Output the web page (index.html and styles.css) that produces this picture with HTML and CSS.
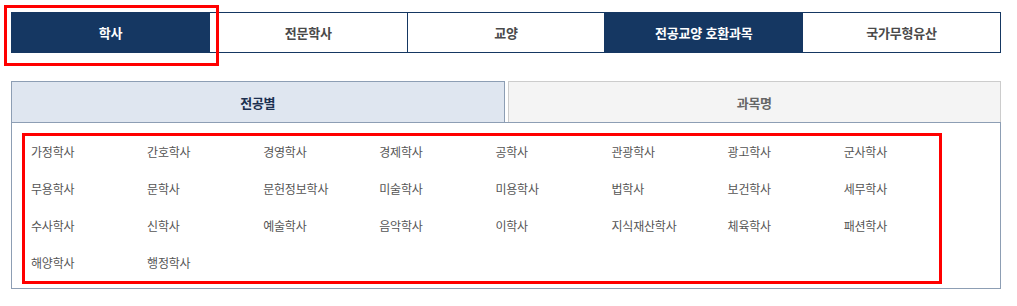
FILE: index.html
```html
<!DOCTYPE html>
<html lang="ko">
<head>
<meta charset="utf-8">
<title>학위 과목</title>
<link rel="stylesheet" href="styles.css">
</head>
<body>
<div class="page">
  <div class="deg-tabs-wrap">
    <ul class="deg-tabs">
      <li class="deg-tab is-active">학사</li>
      <li class="deg-tab">전문학사</li>
      <li class="deg-tab">교양</li>
      <li class="deg-tab is-active">전공교양 호환과목</li>
      <li class="deg-tab">국가무형유산</li>
    </ul>
    <div class="mark mark-tab"></div>
  </div>

  <div class="sub-tabs">
    <div class="sub-tab is-active">전공별</div>
    <div class="sub-tab">과목명</div>
  </div>

  <div class="major-box">
    <ul class="major-list">
      <li>가정학사</li><li>간호학사</li><li>경영학사</li><li>경제학사</li><li>공학사</li><li>관광학사</li><li>광고학사</li><li>군사학사</li>
      <li>무용학사</li><li>문학사</li><li>문헌정보학사</li><li>미술학사</li><li>미용학사</li><li>법학사</li><li>보건학사</li><li>세무학사</li>
      <li>수사학사</li><li>신학사</li><li>예술학사</li><li>음악학사</li><li>이학사</li><li>지식재산학사</li><li>체육학사</li><li>패션학사</li>
      <li>해양학사</li><li>행정학사</li>
    </ul>
    <div class="mark mark-list"></div>
  </div>
</div>
</body>
</html>
```
FILE: styles.css
```css
* { box-sizing: border-box; }
html, body { margin: 0; padding: 0; background: #fff; }
body {
  font-family: "Noto Sans CJK KR", "Noto Sans", sans-serif;
  color: #444;
}
.page {
  padding: 12px 0 0 11px;
  width: 1001px;
}
ul { list-style: none; margin: 0; padding: 0; }

.deg-tabs-wrap { position: relative; }
.deg-tabs {
  display: flex;
  border: 1px solid #153762;
  height: 41px;
}
.deg-tab {
  flex: 1;
  display: flex;
  align-items: center;
  justify-content: center;
  font-size: 13px;
  font-weight: 700;
  letter-spacing: -0.2px;
  color: #4a4a4a;
  border-left: 1px solid #153762;
}
.deg-tab:first-child { border-left: 0; }
.deg-tab.is-active { background: #153762; color: #fff; }

.mark {
  position: absolute;
  border: 3px solid #ff0000;
  pointer-events: none;
}
.mark-tab { left: -7px; top: -7px; width: 215px; height: 61px; }

.sub-tabs {
  display: flex;
  gap: 3px;
  margin-top: 28px;
  height: 41px;
}
.sub-tab {
  flex: 1;
  display: flex;
  align-items: center;
  justify-content: center;
  font-size: 13px;
  font-weight: 700;
  letter-spacing: -0.3px;
  background: #f4f4f4;
  border: 1px solid #cccccc;
  border-bottom: 0;
  color: #666;
}
.sub-tab.is-active {
  background: #dfe6f0;
  border-color: #8d9eb4;
  color: #1c3050;
}

.major-box {
  position: relative;
  border: 1px solid #8d9eb4;
  padding: 19px 0 15px 19px;
}
.major-list {
  display: grid;
  grid-template-columns: repeat(8, 116.1px);
  row-gap: 17px;
}
.major-list li {
  font-size: 12px;
  line-height: 20px;
  letter-spacing: -0.2px;
  color: #555;
  white-space: nowrap;
}
.mark-list { left: 10px; top: 10px; width: 920px; height: 151px; }
```
